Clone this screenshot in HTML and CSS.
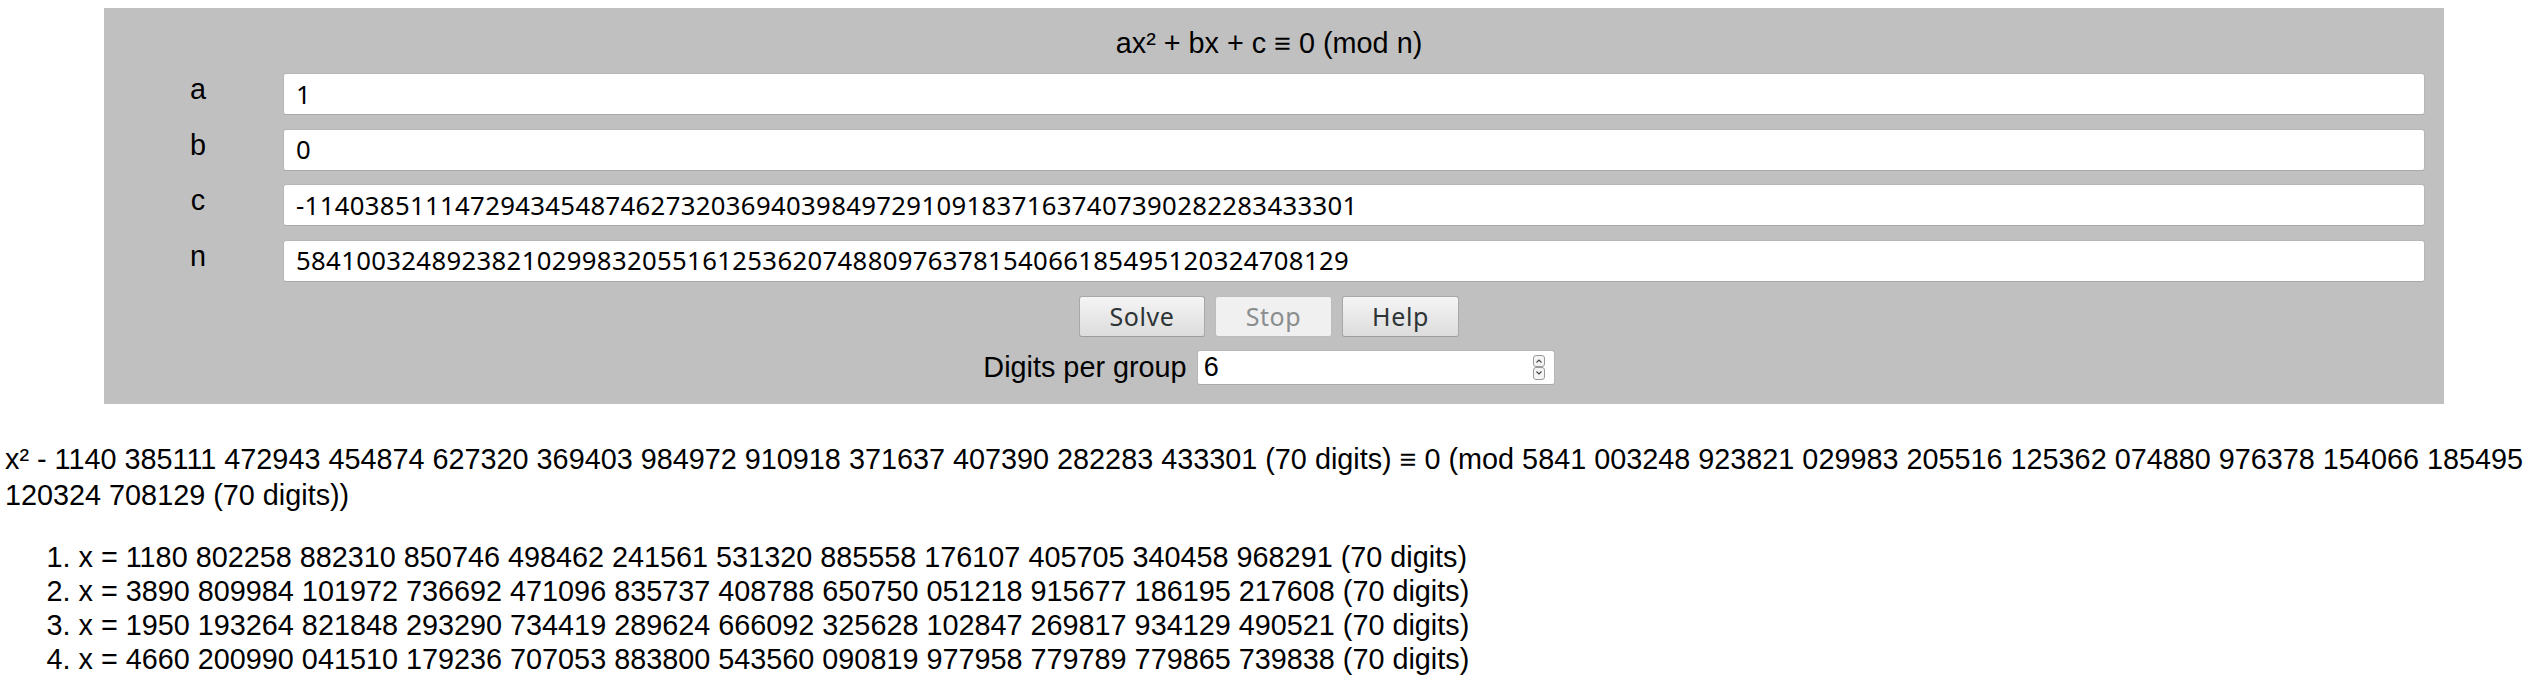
FILE: index.html
```html
<!DOCTYPE html>
<html>
<head>
<meta charset="utf-8">
<title>Quadratic modular equation solver</title>
<link rel="stylesheet" href="styles.css">
</head>
<body>
<div class="panel">
  <div class="title">ax² + bx + c ≡ 0 (mod n)</div>
  <div class="form">
    <label class="lbl">a</label>
    <input class="field" type="text" value="1">
    <label class="lbl">b</label>
    <input class="field" type="text" value="0">
    <label class="lbl">c</label>
    <input class="field" type="text" value="-1140385111472943454874627320369403984972910918371637407390282283433301">
    <label class="lbl">n</label>
    <input class="field" type="text" value="5841003248923821029983205516125362074880976378154066185495120324708129">
  </div>
  <div class="buttons">
    <button class="btn btn-solve">Solve</button>
    <button class="btn btn-stop" disabled>Stop</button>
    <button class="btn btn-help">Help</button>
  </div>
  <div class="digits">
    <span class="digits-label">Digits per group</span>
    <span class="spin-wrap">
      <input class="spin-field" type="text" value="6">
      <span class="spinner">
        <span class="spin-btn"><svg width="8" height="6" viewBox="0 0 8 6"><path d="M1.5 4.5 L4 2 L6.5 4.5" fill="none" stroke="#444" stroke-width="1.1"/></svg></span>
        <span class="spin-btn"><svg width="8" height="6" viewBox="0 0 8 6"><path d="M1.5 1.5 L4 4 L6.5 1.5" fill="none" stroke="#444" stroke-width="1.1"/></svg></span>
      </span>
    </span>
  </div>
</div>
<div class="result">
  <p class="equation">x² - 1140 385111 472943 454874 627320 369403 984972 910918 371637 407390 282283 433301 (70 digits) ≡ 0 (mod 5841 003248 923821 029983 205516 125362 074880 976378 154066 185495 120324 708129 (70 digits))</p>
  <ol class="solutions">
    <li>x = 1180 802258 882310 850746 498462 241561 531320 885558 176107 405705 340458 968291 (70 digits)</li>
    <li>x = 3890 809984 101972 736692 471096 835737 408788 650750 051218 915677 186195 217608 (70 digits)</li>
    <li>x = 1950 193264 821848 293290 734419 289624 666092 325628 102847 269817 934129 490521 (70 digits)</li>
    <li>x = 4660 200990 041510 179236 707053 883800 543560 090819 977958 779789 779865 739838 (70 digits)</li>
  </ol>
</div>
</body>
</html>
```
FILE: styles.css
```css
html, body {
  margin: 0;
  padding: 0;
  background: #ffffff;
}
body {
  font-family: "Liberation Sans", Arial, sans-serif;
  font-size: 28.8px;
  color: #000;
}
.panel {
  box-sizing: border-box;
  width: 2340px;
  margin: 8px 0 0 104px;
  background: #c0c0c0;
  padding: 19px 19px 19px 9px;
}
.title {
  text-align: center;
  line-height: 33px;
  margin-bottom: 13px;
}
.form {
  display: grid;
  grid-template-columns: 170px 1fr;
  row-gap: 13.5px;
}
.lbl {
  text-align: center;
  line-height: 33px;
  align-self: start;
}
.field {
  box-sizing: border-box;
  height: 42px;
  margin: 0;
  padding: 0 12px;
  border: 1px solid #b6b6b6;
  border-bottom-color: #a9a9a9;
  border-radius: 3px;
  background: #fff;
  font-family: "Noto Sans", "Open Sans", sans-serif;
  font-size: 25.7px;
  letter-spacing: 0.35px;
  color: #000;
  outline: none;
  width: 100%;
}
.buttons {
  display: flex;
  justify-content: center;
  gap: 10px;
  margin-top: 14px;
}
.btn {
  box-sizing: border-box;
  height: 41px;
  padding: 0;
  margin: 0;
  border: 1px solid #a8a8a8;
  border-bottom-color: #9c9c9c;
  border-radius: 3px;
  background: linear-gradient(#f5f5f5, #dcdcdc);
  font-family: "Noto Sans", "Open Sans", sans-serif;
  font-size: 25px;
  letter-spacing: 0.6px;
  color: #2e3436;
  line-height: 1;
}
.btn-solve { width: 126px; }
.btn-stop {
  width: 117px;
  background: #f0f0f0;
  border-color: #bcbcbc;
  color: #8b8e8f;
}
.btn-help { width: 117px; }
.digits {
  display: flex;
  justify-content: center;
  align-items: center;
  gap: 10px;
  margin-top: 13px;
}
.digits-label {
  line-height: 33px;
}
.spin-wrap {
  position: relative;
  display: block;
  width: 358px;
  height: 35px;
}
.spin-field {
  box-sizing: border-box;
  width: 358px;
  height: 35px;
  margin: 0;
  padding: 0 6px;
  border: 1px solid #b6b6b6;
  border-bottom-color: #a9a9a9;
  border-radius: 3px;
  background: #fff;
  font-family: "Liberation Sans", Arial, sans-serif;
  font-size: 27px;
  color: #000;
  outline: none;
}
.spinner {
  position: absolute;
  right: 10px;
  top: 5px;
  display: flex;
  flex-direction: column;
}
.spin-btn {
  box-sizing: border-box;
  width: 12px;
  height: 12.5px;
  border: 1px solid #9a9a9a;
  border-radius: 3px;
  background: #f4f4f4;
  display: flex;
  align-items: center;
  justify-content: center;
}
.spin-btn svg { display: block; }
.result {
  margin: 0;
}
.equation {
  margin: 37px 0 0 5px;
  line-height: 36px;
}
.solutions {
  margin: 27px 0 0 0;
  padding-left: 78.5px;
}
.solutions li {
  line-height: 34px;
}
```
